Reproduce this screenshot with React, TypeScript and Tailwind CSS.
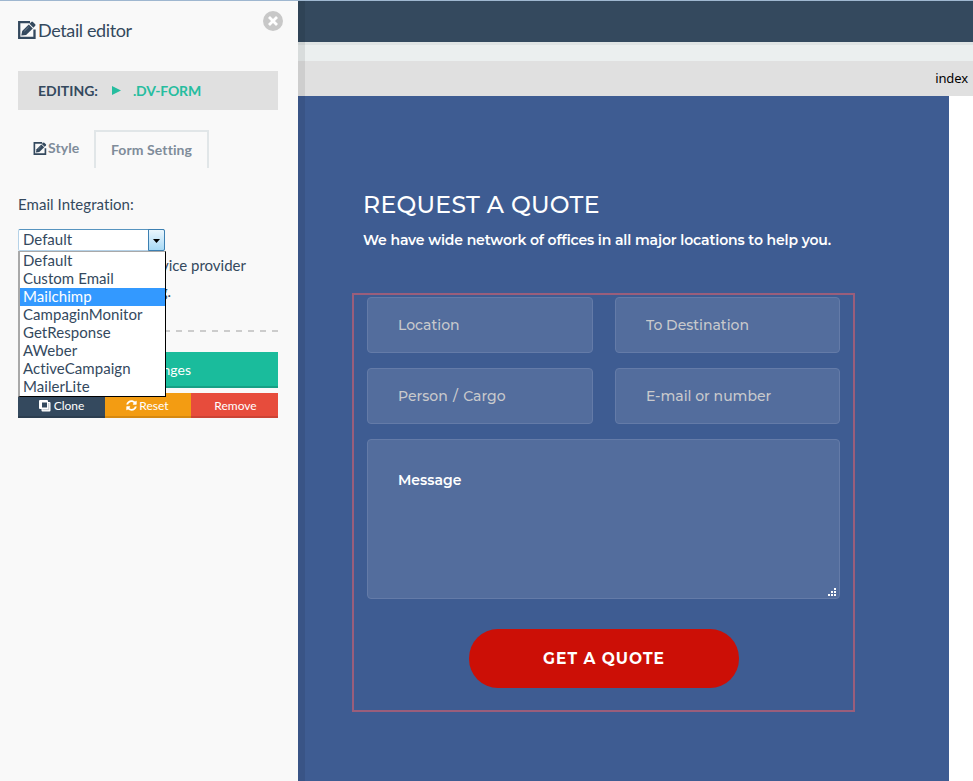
import React from "react";

const options = [
  "Default",
  "Custom Email",
  "Mailchimp",
  "CampaginMonitor",
  "GetResponse",
  "AWeber",
  "ActiveCampaign",
  "MailerLite",
];

function EditIcon({ className }: { className?: string }) {
  return (
    <svg viewBox="0 0 18 18" className={className} fill="none">
      <path d="M12 1.200H1.200v15.600h15.300V8.500" stroke="#34495e" strokeWidth="2.300" />
      <path d="M3.300 14.500l.9-4.600 6.600-6.500 4 4-6.700 6.500z" fill="#34495e" />
      <path d="M11.500 2.700L13.300.9q.8-.7 1.600 0l2.300 2.300q.7.800 0 1.600l-1.800 1.900z" fill="#34495e" />
      <path d="M6.300 10.200l4.400-4.300" stroke="#8a97a4" strokeWidth="0.700" />
    </svg>
  );
}

function CloneIcon() {
  return (
    <svg viewBox="0 0 12 12" className="h-[12px] w-[12px]" fill="none">
      <path d="M1 0h7q1 0 1 1v1h1.500q1 0 1 1v7.500q0 1-1 1H3.500q-1 0-1-1V9H1Q0 9 0 8V1q0-1 1-1z" fill="#fff" />
      <path d="M3 2.500h5v5H3z" fill="#34495e" />
      <path d="M9.700 3v6.700H3.500" stroke="#9aa4af" strokeWidth="0.600" />
    </svg>
  );
}

function ResetIcon() {
  return (
    <svg viewBox="0 0 512 512" className="h-[11px] w-[11px]" fill="#fff">
      <path d="M500 300c-22 113-121 196-242 196-64 0-122-25-166-66l-36 36c-15 15-41 4-41-17V320c0-13 11-24 24-24h132c21 0 32 26 17 41l-40 40c28 27 67 43 109 43 68 0 127-44 148-106 3-9 10-14 18-14zM12 212C34 99 133 16 254 16c64 0 123 25 166 66l36-36c15-15 41-4 41 17v129c0 13-11 24-24 24H341c-21 0-32-26-17-41l40-40c-28-27-66-43-109-43-68 0-127 44-148 106-3 9-9 14-18 14z" />
    </svg>
  );
}

function EditorPanel() {
  return (
    <aside className="flex w-[298px] shrink-0 flex-col bg-[#f9f9f9] pl-[18px] pr-5 font-['Lato',sans-serif] text-[15px] text-[#34495e]">
      <header className="-mr-[5px] flex h-[70px] items-start justify-between">
        <div className="flex items-end gap-[2px] pt-[18px]">
          <EditIcon className="mb-[3px] h-[18px] w-[18px]" />
          <h1 className="text-[18px] leading-[23px] tracking-[-0.38px]">Detail editor</h1>
        </div>
        <svg viewBox="0 0 20 20" className="mt-[10px] h-5 w-5">
          <circle cx="10" cy="10" r="10" fill="#c8c8c8" />
          <path d="M6 6l8 8M14 6l-8 8" stroke="#fff" strokeWidth="2.800" />
        </svg>
      </header>

      <div className="flex h-[39px] shrink-0 items-center bg-[#e0e0e0] pl-5 text-[14px] font-bold leading-5">
        <span className="w-[74px]">EDITING:</span>
        <svg viewBox="0 0 9 9" className="h-[9px] w-[9px]" fill="#26bd9f">
          <path d="M0 0L9 4.500 0 9z" />
        </svg>
        <span className="ml-[12px] tracking-[-0.2px] text-[#26bd9f]">.DV-FORM</span>
      </div>

      <nav className="mt-5 flex h-[38px] shrink-0 pl-[15px] text-[14px] font-bold text-[#7f8c9a]">
        <div className="flex w-[61px] items-center gap-px pb-[2px]">
          <EditIcon className="h-[13px] w-[14px]" />
          <span className="leading-5 tracking-[0.1px]">Style</span>
        </div>
        <div className="flex w-[115px] items-center justify-center border-2 border-b-0 border-[#e1e6e8] leading-5 tracking-[0.1px]">
          Form Setting
        </div>
      </nav>

      <label className="mt-[26px] h-[35px] shrink-0 leading-5 tracking-[0.05px]">Email Integration:</label>

      <div className="relative h-[22px] w-[147px] shrink-0">
        <div className="flex h-[22px] rounded-[2px] border border-[#b5d2e8] border-t-[#5794bf] bg-white">
          <span className="flex-1 pl-1 leading-[18px]">Default</span>
          <span className="-my-px -mr-px flex w-[17px] items-center justify-center rounded-r-[2px] border border-[#3c7fb1] bg-linear-to-b from-[#eaf6fd] to-[#a7d9f5]">
            <svg viewBox="0 0 7 4" className="mt-[2px] h-[4px] w-[7px]">
              <path d="M0 0h7L3.500 4z" fill="#000" />
            </svg>
          </span>
        </div>
        <ul className="absolute left-0 top-[22px] z-10 w-[148px] border-b border-l-2 border-r border-t border-b-black border-l-[#a9a9a9] border-r-black border-t-[#a9a9a9] bg-white">
          {options.map((option) => (
            <li
              key={option}
              className={
                option === "Mailchimp"
                  ? "h-[18px] bg-[#3399ff] pl-[3px] leading-[16px] tracking-[0.05px] text-white"
                  : "h-[18px] pl-[3px] leading-[16px] tracking-[0.05px]"
              }
            >
              {option}
            </li>
          ))}
        </ul>
      </div>

      <div className="mt-px h-[78px] shrink-0 text-right leading-[26px]">
        <p className="w-[228px]">service provider</p>
        <p className="w-[153px]">g.</p>
      </div>
      <div className="h-[2px] shrink-0 bg-[repeating-linear-gradient(to_left,#cccccc_0,#cccccc_6px,transparent_6px,transparent_12px)]" />

      <button className="mt-5 h-9 shrink-0 border-b-2 border-[#16a085] bg-[#1abc9c] pr-[87px] text-right text-[14px] text-white">
        nges
      </button>
      <div className="mt-[5px] grid h-[25px] shrink-0 grid-cols-[87px_86px_87px] text-[12px] text-white">
        <button className="flex items-center justify-center gap-[3px] border-b-2 border-[#2c3e50] bg-[#34495e] pt-[2px]">
          <CloneIcon />
          <span>Clone</span>
        </button>
        <button className="flex items-center justify-center gap-[2px] border-b-2 border-[#d68910] bg-[#f39c12] pr-px pt-[2px]">
          <ResetIcon />
          <span>Reset</span>
        </button>
        <button className="flex items-center justify-center border-b-2 border-[#cc4335] bg-[#e74c3c] pl-[2px] pt-[2px]">
          Remove
        </button>
      </div>
    </aside>
  );
}

const fieldClass =
  "h-14 w-full rounded-[4px] border border-[#647ba8] bg-[#536d9d] pl-[30px] text-[14px] font-medium text-white outline-none placeholder:text-[#c8c9cc]";

function QuoteForm() {
  return (
    <section className="h-[685px] w-[651px] bg-[#3e5c92] pl-[54px] pt-[94px] font-['Montserrat','Inter',sans-serif] text-white">
      <h2 className="pl-[11px] text-[23.500px] font-medium leading-[30px] tracking-[0.3px]">REQUEST A QUOTE</h2>
      <p className="mt-[10px] pl-[11px] text-[14px] font-semibold leading-5 tracking-[-0.13px]">
        We have wide network of offices in all major locations to help you.
      </p>
      <form className="mt-[43px] h-[419px] w-[503px] border-2 border-[#9a5e7b] px-[13px] pt-[2px]">
        <div className="grid grid-cols-[226px_225px] gap-x-[22px] gap-y-[15px]">
          <input className={fieldClass} placeholder="Location" />
          <input className={fieldClass} placeholder="To Destination" />
          <input className={`${fieldClass} [word-spacing:1.5px]`} placeholder="Person / Cargo" />
          <input className={fieldClass} placeholder="E-mail or number" />
        </div>
        <div className="mt-[15px] flex h-[160px] flex-col justify-between rounded-[4px] border border-[#647ba8] bg-[#536d9d] pb-[2px] pl-[30px] pr-[3px] pt-[30px] text-[14px] font-semibold leading-5">
          <span>Message</span>
          <svg viewBox="0 0 8 8" className="h-2 w-2 self-end" fill="#fff">
            <path d="M6 0h2v2H6zM3 3h2v2H3zM6 3h2v2H6zM0 6h2v2H0zM3 6h2v2H3zM6 6h2v2H6z" />
          </svg>
        </div>
        <button
          type="button"
          className="ml-[102px] mt-[30px] h-[59px] w-[270px] rounded-[29px] bg-[#cc0f06] text-[15.500px] font-bold tracking-[1px]"
        >
          GET A QUOTE
        </button>
      </form>
    </section>
  );
}

export default function App() {
  return (
    <div className="flex h-[781px] w-[973px] overflow-hidden border-t border-[#9fb7d0] bg-white">
      <EditorPanel />
      <main className="relative flex-1">
        <div className="h-[41px] bg-[#34495e]" />
        <div className="h-[3px] bg-[#dfe4e4]" />
        <div className="h-4 bg-[#ebefef]" />
        <div className="flex h-[35px] items-center justify-end bg-[#e0e0e0] pr-[5px] font-['Noto_Sans',sans-serif] text-[13px] tracking-[-0.1px] text-black">
          index
        </div>
        <QuoteForm />
        <div className="pointer-events-none absolute inset-y-0 left-0 w-[7px] bg-black/8" />
      </main>
    </div>
  );
}
